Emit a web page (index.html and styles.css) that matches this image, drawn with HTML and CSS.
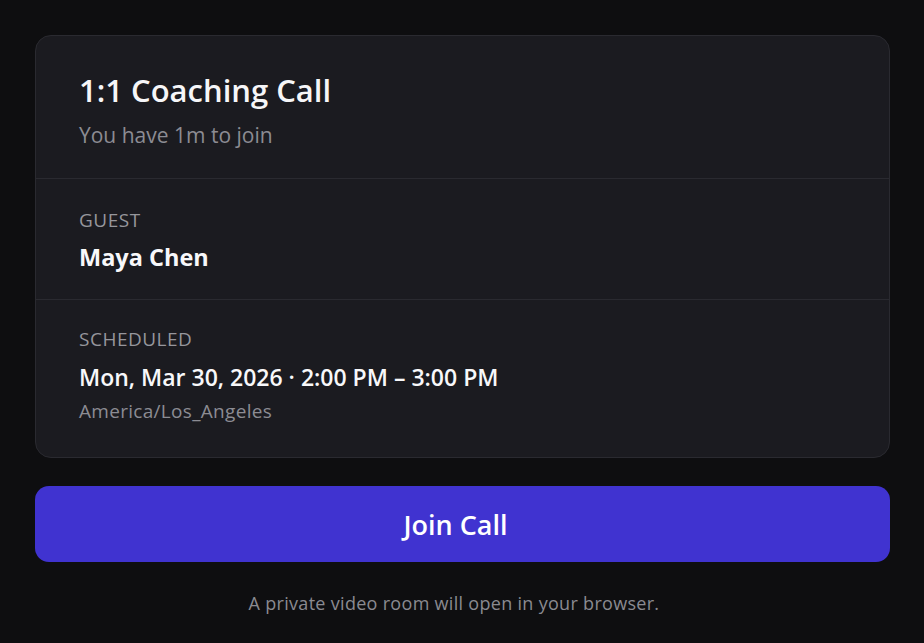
FILE: index.html
```html
<!DOCTYPE html>
<html lang="en">
<head>
<meta charset="utf-8">
<title>1:1 Coaching Call</title>
<link rel="stylesheet" href="styles.css">
</head>
<body>
<main class="page">
  <section class="card">
    <div class="section section-head">
      <h1 class="title">1:1 Coaching Call</h1>
      <p class="subtitle">You have 1m to join</p>
    </div>
    <div class="section section-guest">
      <div class="label">GUEST</div>
      <div class="guest-name">Maya Chen</div>
    </div>
    <div class="section section-sched">
      <div class="label">SCHEDULED</div>
      <div class="when">Mon, Mar 30, 2026 · 2:00 PM – 3:00 PM</div>
      <div class="tz">America/Los_Angeles</div>
    </div>
  </section>
  <button class="join" type="button">Join Call</button>
  <p class="note">A private video room will open in your browser.</p>
</main>
</body>
</html>
```

FILE: styles.css
```css
* { box-sizing: border-box; }
html, body {
  margin: 0;
  padding: 0;
  background: #0e0e10;
}
body {
  font-family: "Open Sans", "Noto Sans", "DejaVu Sans", sans-serif;
  color: #f4f4f6;
}
.page {
  padding: 35px 34px 0 35px;
  display: flex;
  flex-direction: column;
}
.card {
  background: #1b1b20;
  border: 1px solid #2a2a30;
  border-radius: 16px;
  display: flex;
  flex-direction: column;
}
.section {
  padding: 0 43px;
}
.section + .section {
  border-top: 1px solid #2a2a30;
}
.section-head {
  padding-top: 35px;
  padding-bottom: 30px;
}
.title {
  margin: 0;
  font-size: 31px;
  font-weight: 600;
  line-height: 39px;
  color: #f6f6f8;
}
.subtitle {
  margin: 12px 0 0;
  font-size: 21px;
  line-height: 26px;
  color: #8c8c93;
}
.section-guest {
  padding-top: 29px;
  padding-bottom: 27px;
}
.section-sched {
  padding-top: 27px;
  padding-bottom: 34px;
}
.label {
  font-size: 19px;
  line-height: 24px;
  color: #96969c;
  letter-spacing: 0.5px;
}
.guest-name {
  margin-top: 10px;
  font-size: 23.5px;
  line-height: 30px;
  font-weight: 700;
  color: #f8f8fa;
}
.when {
  margin-top: 12px;
  font-size: 23px;
  line-height: 28px;
  font-weight: 600;
  color: #f8f8fa;
}
.tz {
  margin-top: 8px;
  font-size: 19px;
  line-height: 24px;
  letter-spacing: 0.3px;
  color: #8c8c93;
}
.join {
  margin-top: 28px;
  height: 76px;
  padding: 0 14px 0 0;
  border: 0;
  border-radius: 14px;
  background: #4033d0;
  color: #ffffff;
  font-family: inherit;
  font-size: 27px;
  font-weight: 600;
}
.note {
  margin: 30px 0 0;
  padding-right: 17px;
  text-align: center;
  font-size: 18px;
  line-height: 22px;
  letter-spacing: 0.3px;
  color: #8a8a90;
}
```
